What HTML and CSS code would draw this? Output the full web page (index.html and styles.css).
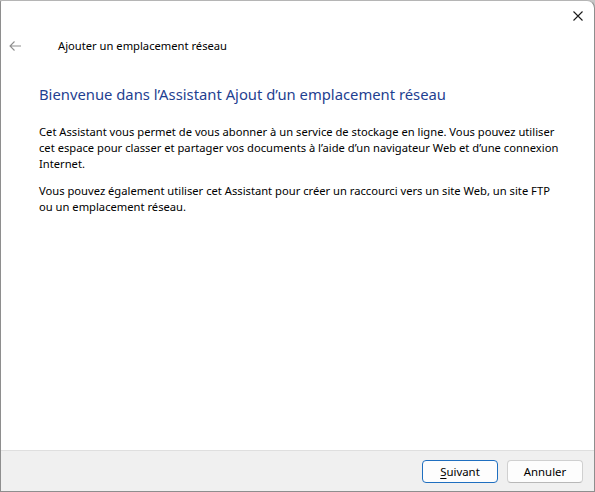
FILE: index.html
```html
<!DOCTYPE html>
<html lang="fr">
<head>
<meta charset="utf-8">
<title>Ajouter un emplacement réseau</title>
<link rel="stylesheet" href="styles.css">
</head>
<body>
<div class="window">
  <div class="titlebar">
    <button class="close" aria-label="Fermer">
      <svg width="10" height="10" viewBox="0 0 10 10"><path d="M0.5 0.5 L9.5 9.5 M9.5 0.5 L0.5 9.5" stroke="#1a1a1a" stroke-width="1.1" fill="none"/></svg>
    </button>
  </div>
  <div class="header">
    <span class="back">
      <svg width="12" height="10" viewBox="0 0 12 10"><path d="M5.5 0.5 L1 5 L5.5 9.5 M1 5 H12" stroke="#8f8f8f" stroke-width="1.1" fill="none"/></svg>
    </span>
    <span class="wtitle">Ajouter un emplacement réseau</span>
  </div>
  <div class="content">
    <h1 class="heading">Bienvenue dans l’Assistant Ajout d’un emplacement réseau</h1>
    <p class="para">Cet Assistant vous permet de vous abonner à un service de stockage en ligne. Vous pouvez utiliser<br>cet espace pour classer et partager vos documents à l’aide d’un navigateur Web et d’une connexion<br>Internet.</p>
    <p class="para">Vous pouvez également utiliser cet Assistant pour créer un raccourci vers un site Web, un site FTP<br>ou un emplacement réseau.</p>
  </div>
  <div class="footer">
    <button class="btn btn-default"><u>S</u>uivant</button>
    <button class="btn">Annuler</button>
  </div>
</div>
</body>
</html>
```

FILE: styles.css
```css
* { box-sizing: border-box; }
html, body { margin: 0; padding: 0; }
body {
  width: 595px;
  height: 492px;
  background: #c8c8c8;
  font-family: "Noto Sans", "Open Sans", sans-serif;
  font-size: 11.2px;
  color: #000;
}
.window {
  width: 595px;
  height: 492px;
  background: #fff;
  border: 1px solid #8e8e8e;
  border-top-color: #b5b5b5;
  border-top-right-radius: 8px;
  border-top-left-radius: 2px;
  display: flex;
  flex-direction: column;
  overflow: hidden;
}
.titlebar {
  height: 30px;
  display: flex;
  justify-content: flex-end;
  flex-shrink: 0;
}
.close {
  width: 30px;
  height: 30px;
  margin-right: 1px;
  border: 0;
  background: transparent;
  padding: 0;
  display: flex;
  align-items: center;
  justify-content: center;
}
.header {
  height: 30px;
  display: flex;
  align-items: center;
  flex-shrink: 0;
}
.back {
  width: 12px;
  height: 10px;
  margin-left: 8px;
  display: flex;
}
.wtitle {
  margin-left: 37px;
  font-size: 11.2px;
  line-height: 16px;
}
.content {
  padding-left: 38px;
  flex: 1;
}
.heading {
  margin: 22px 0 0 0;
  font-size: 14.8px;
  font-weight: normal;
  color: #1f3f91;
  line-height: 22px;
}
.para {
  margin: 19px 0 0 0;
  line-height: 16px;
  white-space: nowrap;
}
.para + .para { margin-top: 11px; }
.footer {
  height: 41px;
  flex-shrink: 0;
  background: #f0f0f0;
  border-top: 1px solid #dfdfdf;
  display: flex;
  justify-content: flex-end;
  align-items: flex-start;
  padding: 9px 11px 0 0;
  gap: 9px;
}
.btn {
  width: 76px;
  height: 23px;
  border: 1px solid #d0d0d0;
  border-bottom-color: #b8b8b8;
  border-radius: 4px;
  background: #fdfdfd;
  font-family: inherit;
  font-size: 11.4px;
  color: #000;
  padding: 0;
  line-height: 20px;
}
.btn-default {
  border: 1px solid #1f6fc0;
  background: #fdfdfd;
}
.btn u { text-underline-offset: 2px; }
```
